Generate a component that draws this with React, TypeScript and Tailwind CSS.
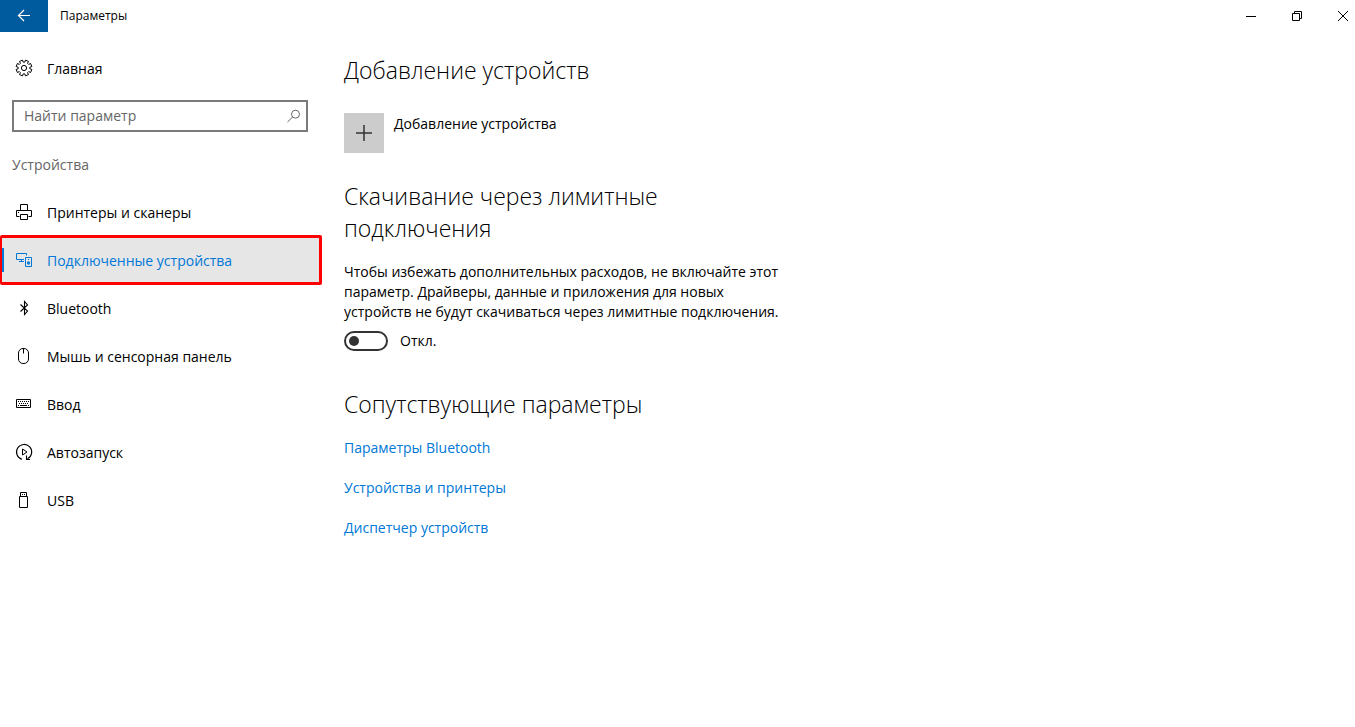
import React from "react";

const svgProps = {
  width: 18,
  height: 18,
  viewBox: "0 0 18 18",
  fill: "none",
  stroke: "currentColor",
  strokeWidth: 1,
  "aria-hidden": true,
} as const;

// eight teeth, four outline points for each
const gearPoints = Array.from({ length: 8 }, (_, i) => i * 45 + 22.5)
  .flatMap((a) => [
    [a - 15, 5.9],
    [a - 12, 8],
    [a + 12, 8],
    [a + 15, 5.9],
  ])
  .map(([a, r]) => {
    const rad = (a * Math.PI) / 180;
    return `${(9 + r * Math.cos(rad)).toFixed(2)},${(9 + r * Math.sin(rad)).toFixed(2)}`;
  })
  .join(" ");

const GearIcon = () => (
  <svg {...svgProps}>
    <polygon points={gearPoints} strokeLinejoin="round" />
    <circle cx="9" cy="9" r="2.6" />
  </svg>
);

const PrinterIcon = () => (
  <svg {...svgProps}>
    <path d="M5.5 7.5v-6h7v6M4.5 13.5h-3v-6h15v6h-3M5.5 11.5h7v5h-7z" />
    <path d="M3 9.5h1" />
  </svg>
);

const DevicesIcon = () => (
  <svg {...svgProps}>
    <path d="M9 8.5H1.5v-6h10v2M6.5 8.5v2M4 10.5h5" />
    <path d="M10.5 6.5h6v9h-6z" />
    <path d="M13 8.5h1" />
    <circle cx="13.5" cy="12" r="1" strokeWidth="1.3" />
  </svg>
);

const BluetoothIcon = () => (
  <svg {...svgProps}>
    <path d="M5.5 5.5l7 6.5-3 3.5v-13l3 3.5-7 6.5" strokeWidth="1.1" />
  </svg>
);

const MouseIcon = () => (
  <svg {...svgProps}>
    <rect x="3.5" y="1.5" width="10" height="15" rx="4.5" />
    <path d="M8.5 1.5v5" />
  </svg>
);

const KeyboardIcon = () => (
  <svg {...svgProps}>
    <path d="M1.5 4.5h14v8h-14z" />
    <path d="M3 6.5h11M4 8.5h10" strokeDasharray="1 1" />
    <path d="M3 10.5h1M5 10.5h7M13 10.5h1" />
  </svg>
);

const AutoplayIcon = () => (
  <svg {...svgProps}>
    <path d="M7 16.3A7.6 7.6 0 1 1 12.5 15.8" strokeWidth="1.1" />
    <path d="M7.5 6v6L12 9z" />
    <path d="M11.5 12.5v4H15" strokeWidth="1.1" />
  </svg>
);

const UsbIcon = () => (
  <svg {...svgProps}>
    <path d="M4.5 5.5h8v11h-8zM5.5 5.5v-4h6v4" />
    <path d="M7 3.5h1M9 3.5h1" />
  </svg>
);

const menu = [
  { label: "Принтеры и сканеры", icon: PrinterIcon },
  { label: "Подключенные устройства", icon: DevicesIcon, active: true },
  { label: "Bluetooth", icon: BluetoothIcon },
  { label: "Мышь и сенсорная панель", icon: MouseIcon },
  { label: "Ввод", icon: KeyboardIcon },
  { label: "Автозапуск", icon: AutoplayIcon },
  { label: "USB", icon: UsbIcon },
];

const related = [
  "Параметры Bluetooth",
  "Устройства и принтеры",
  "Диспетчер устройств",
];

const TitleBar = () => (
  <header className="flex h-8 items-center">
    <button
      aria-label="Назад"
      className="flex h-8 w-12 items-center justify-center bg-[#005a9e] text-white"
    >
      <svg {...svgProps}>
        <path d="M15 8.5H3.5M9 3L3.5 8.5 9 14" strokeWidth="1.2" />
      </svg>
    </button>
    <h1 className="ml-3 flex-1 text-xs">Параметры</h1>
    <div className="-mr-[11px] flex">
      <button
        aria-label="Свернуть"
        className="flex h-8 w-[46px] items-center justify-center"
      >
        <svg {...svgProps}>
          <path d="M4 9.5h10" />
        </svg>
      </button>
      <button
        aria-label="Восстановить"
        className="flex h-8 w-[46px] items-center justify-center"
      >
        <svg {...svgProps}>
          <path d="M4.5 6.5h7v7h-7zM6.5 6.5v-2h7v7h-2" />
        </svg>
      </button>
      <button
        aria-label="Закрыть"
        className="flex h-8 w-[46px] items-center justify-center"
      >
        <svg {...svgProps}>
          <path d="M4 4l10 10M14 4L4 14" />
        </svg>
      </button>
    </div>
  </header>
);

const Sidebar = () => (
  <aside className="w-[322px] shrink-0 pt-3">
    <a href="#home" className="flex h-12 items-center gap-[14px] pl-[15px]">
      <GearIcon />
      <span className="pt-[2px]">Главная</span>
    </a>
    <label className="mt-2 mr-[14px] ml-3 flex h-8 items-center border-2 border-[#7a7a7a] pr-1 pl-[10px] text-[#666]">
      <input
        type="text"
        aria-label="Найти параметр"
        placeholder="Найти параметр"
        className="min-w-0 flex-1 bg-transparent outline-none placeholder:text-[#666]"
      />
      <svg {...svgProps}>
        <circle cx="11.5" cy="7.2" r="4" />
        <path d="M8.6 10L3.5 15" />
      </svg>
    </label>
    <h2 className="mt-4 flex h-8 items-center pt-[2px] pl-3 text-[#666]">
      Устройства
    </h2>
    <nav className="mt-2">
      {menu.map(({ label, icon: Icon, active }) =>
        active ? (
          <a
            key={label}
            href="#connected"
            aria-current="page"
            className="-my-px flex h-[50px] items-center rounded-xs border-3 border-l-2 border-[#f00] bg-[#e6e6e6] text-[#0078d7]"
          >
            <span className="h-6 w-[2px] bg-[#0078d7]" />
            <span className="flex items-center gap-[14px] pl-[11px]">
              <Icon />
              <span className="pt-[2px]">{label}</span>
            </span>
          </a>
        ) : (
          <a
            key={label}
            href="#section"
            className="flex h-12 items-center gap-[14px] pl-[15px]"
          >
            <Icon />
            <span className="pt-[2px]">{label}</span>
          </a>
        ),
      )}
    </nav>
  </aside>
);

const App = () => {
  return (
    <div className="min-h-screen bg-white font-['Open_Sans','Noto_Sans',sans-serif] text-sm leading-5 text-black">
      <TitleBar />
      <div className="flex">
        <Sidebar />
        <main className="max-w-[464px] flex-1 pt-[22px] pl-[22px]">
          <section>
            <h2 className="text-[23px] leading-8 font-light">
              Добавление устройств
            </h2>
            <button className="mt-[27px] flex items-start gap-[10px]">
              <span className="flex size-10 items-center justify-center bg-[#ccc] text-[#333]">
                <svg {...svgProps}>
                  <path d="M9 1v16M1 9h16" strokeWidth="1.5" />
                </svg>
              </span>
              <span className="pt-px">Добавление устройства</span>
            </button>
          </section>

          <section className="mt-[27px]">
            <h2 className="text-[23px] leading-8 font-light">
              Скачивание через лимитные подключения
            </h2>
            <p className="mt-[18px]">
              Чтобы избежать дополнительных расходов, не включайте этот
              параметр. Драйверы, данные и приложения для новых устройств не
              будут скачиваться через лимитные подключения.
            </p>
            <label className="mt-[9px] flex items-center gap-3">
              <input type="checkbox" role="switch" className="peer sr-only" />
              <span className="flex h-5 w-11 items-center rounded-full border-2 border-[#333] pl-[3px] peer-checked:justify-end peer-checked:pr-[3px]">
                <span className="size-[10px] rounded-full bg-[#333]" />
              </span>
              Откл.
            </label>
          </section>

          <section className="mt-[37px]">
            <h2 className="text-[23px] leading-8 font-light">
              Сопутствующие параметры
            </h2>
            <ul className="mt-[18px] flex flex-col gap-5 text-[#0078d7]">
              {related.map((item) => (
                <li key={item}>
                  <a href="#related">{item}</a>
                </li>
              ))}
            </ul>
          </section>
        </main>
      </div>
    </div>
  );
};

export default App;
